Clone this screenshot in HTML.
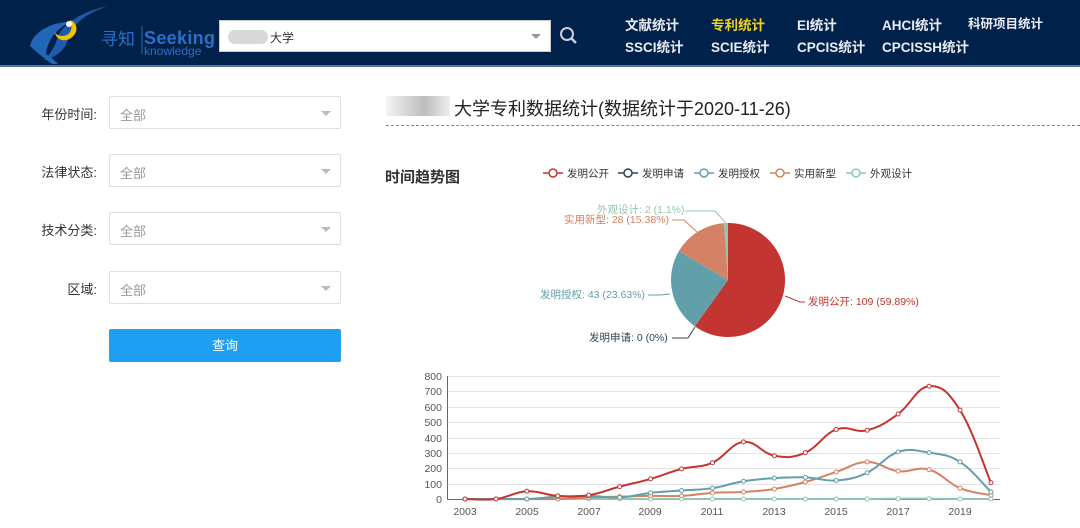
<!DOCTYPE html>
<html><head><meta charset="utf-8"><style>
*{margin:0;padding:0;box-sizing:border-box}
body{width:1080px;height:528px;background:#fff;font-family:"Liberation Sans","Noto Sans CJK SC",sans-serif;position:relative;overflow:hidden}
.hdr{position:absolute;left:0;top:0;width:1080px;height:67px;background:#00214a;border-bottom:2px solid #5a7398}
.nav{position:absolute;color:#e8ecf2;font-size:13.5px;font-weight:bold}
.lbl{position:absolute;left:0;width:97px;text-align:right;font-size:13px;color:#333}
.sel{position:absolute;left:109px;width:232px;height:33px;border:1px solid #dcdfe6;border-radius:2px;font-size:13px;color:#999;padding:8px 10px}
.sel:after{content:"";position:absolute;right:9px;top:14px;border:5px solid transparent;border-top:5px solid #bbb}
.t{font-family:"Liberation Sans","Noto Sans CJK SC",sans-serif}
</style></head><body>
<div class="hdr">
 <svg width="230" height="66" style="position:absolute;left:0;top:0">
  <path d="M108 6 C85 14 72 24 68 40 C64 52 54 58 44 60 C52 52 56 44 58 36 C66 20 88 10 108 6 Z" fill="#1e5aa8"/>
  <path d="M32 40 C40 28 55 22 70 22 C58 28 48 38 46 54 C52 58 56 62 58 64 L52 64 C44 58 36 52 30 46 Z" fill="#2266b8"/>
  <path d="M55 32 C56 42 70 44 76 32 C78 26 74 21 70 20 C73 26 72 36 62 36 C58 36 56 34 55 32 Z" fill="#f2c200"/>
  <circle cx="69" cy="24" r="3" fill="#fff"/>
  <text x="101" y="45" fill="#2d6fc4" font-size="17" class="t">寻知</text>
  <line x1="142" y1="26" x2="142" y2="54" stroke="#2d6fc4"/>
  <text x="144" y="44" fill="#2d6fc4" font-size="18" font-weight="bold" class="t" textLength="71">Seeking</text>
  <text x="144" y="55" fill="#2d6fc4" font-size="12" class="t">knowledge</text>
 </svg>
 <div style="position:absolute;left:219px;top:20px;width:332px;height:32px;background:#fff;border:1px solid #ccc">
  <div style="position:absolute;left:8px;top:9px;width:40px;height:14px;background:#d8d8d8;border-radius:7px"></div>
  <span style="position:absolute;left:50px;top:8px;font-size:12px;color:#333">大学</span>
  <div style="position:absolute;right:9px;top:13px;border:5px solid transparent;border-top:5px solid #999"></div>
 </div>
 <svg width="20" height="20" style="position:absolute;left:559px;top:26px"><circle cx="8" cy="8" r="6" stroke="#ccd" stroke-width="2" fill="none"/><line x1="12" y1="12" x2="17" y2="17" stroke="#ccd" stroke-width="2.5"/></svg>
 <div class="nav" style="left:625px;top:14px">文献统计</div>
 <div class="nav" style="left:711px;top:14px;color:#f0d020">专利统计</div>
 <div class="nav" style="left:797px;top:14px">EI统计</div>
 <div class="nav" style="left:882px;top:14px">AHCI统计</div>
 <div class="nav" style="left:968px;top:13px;font-size:12.5px">科研项目统计</div>
 <div class="nav" style="left:625px;top:36px">SSCI统计</div>
 <div class="nav" style="left:711px;top:36px">SCIE统计</div>
 <div class="nav" style="left:797px;top:36px">CPCIS统计</div>
 <div class="nav" style="left:882px;top:36px">CPCISSH统计</div>
</div>

<div class="lbl" style="top:104px">年份时间:</div><div class="sel" style="top:96px">全部</div>
<div class="lbl" style="top:162px">法律状态:</div><div class="sel" style="top:154px">全部</div>
<div class="lbl" style="top:220px">技术分类:</div><div class="sel" style="top:212px">全部</div>
<div class="lbl" style="top:279px">区域:</div><div class="sel" style="top:271px">全部</div>
<div style="position:absolute;left:109px;top:329px;width:232px;height:33px;background:#1e9ff2;color:#fff;font-size:13px;text-align:center;line-height:33px;border-radius:2px">查询</div>

<div style="position:absolute;left:386px;top:96px;width:64px;height:20px;background:linear-gradient(90deg,#f4f4f4,#cfcfcf 40%,#bdbdbd 60%,#eee)"></div>
<div style="position:absolute;left:454px;top:95px;font-size:18px;color:#222">大学专利数据统计(数据统计于2020-11-26)</div>
<div style="position:absolute;left:386px;top:125px;width:694px;border-top:1px dashed #888"></div>
<div style="position:absolute;left:385px;top:166px;font-size:15px;font-weight:bold;color:#333">时间趋势图</div>

<svg id="c" width="1080" height="528" style="position:absolute;left:0;top:0" class="t">
 <g font-size="10.5">
  <g transform="translate(543,173)"><line x1="0" y1="0" x2="20" y2="0" stroke="#c23531" stroke-width="1.5"/><circle cx="10" cy="0" r="4" fill="#fff" stroke="#c23531" stroke-width="1.5"/><text x="24" y="4" fill="#333">发明公开</text></g>
  <g transform="translate(618,173)"><line x1="0" y1="0" x2="20" y2="0" stroke="#2f4554" stroke-width="1.5"/><circle cx="10" cy="0" r="4" fill="#fff" stroke="#2f4554" stroke-width="1.5"/><text x="24" y="4" fill="#333">发明申请</text></g>
  <g transform="translate(694,173)"><line x1="0" y1="0" x2="20" y2="0" stroke="#61a0a8" stroke-width="1.5"/><circle cx="10" cy="0" r="4" fill="#fff" stroke="#61a0a8" stroke-width="1.5"/><text x="24" y="4" fill="#333">发明授权</text></g>
  <g transform="translate(770,173)"><line x1="0" y1="0" x2="20" y2="0" stroke="#d48265" stroke-width="1.5"/><circle cx="10" cy="0" r="4" fill="#fff" stroke="#d48265" stroke-width="1.5"/><text x="24" y="4" fill="#333">实用新型</text></g>
  <g transform="translate(846,173)"><line x1="0" y1="0" x2="20" y2="0" stroke="#91c7ae" stroke-width="1.5"/><circle cx="10" cy="0" r="4" fill="#fff" stroke="#91c7ae" stroke-width="1.5"/><text x="24" y="4" fill="#333">外观设计</text></g>
 </g>
 <path d="M728 280 L728 223 A57 57 0 1 1 694.8 326.3 Z" fill="#c23531"/>
 <path d="M728 280 L694.8 326.3 A57 57 0 0 1 678.9 251 Z" fill="#61a0a8"/>
 <path d="M728 280 L678.9 251 A57 57 0 0 1 724 223.1 Z" fill="#d48265"/>
 <path d="M728 280 L724 223.1 A57 57 0 0 1 728 223 Z" fill="#91c7ae"/>
 <g fill="none" stroke-width="1">
  <polyline points="785,296 800,302 805,302" stroke="#c23531"/>
  <polyline points="695,327 688,338 672,338" stroke="#2f4554"/>
  <polyline points="670,294 660,295 648,295" stroke="#61a0a8"/>
  <polyline points="697,232 684,220 672,220" stroke="#d48265"/>
  <polyline points="726,223 715,211 685,211" stroke="#91c7ae"/>
 </g>
 <g font-size="10.5">
  <text x="808" y="305" fill="#c23531">发明公开: 109 (59.89%)</text>
  <text x="589" y="341" fill="#2f4554">发明申请: 0 (0%)</text>
  <text x="540" y="298" fill="#61a0a8">发明授权: 43 (23.63%)</text>
  <text x="564" y="223" fill="#d48265">实用新型: 28 (15.38%)</text>
  <text x="597" y="213" fill="#91c7ae">外观设计: 2 (1.1%)</text>
 </g>
 <g stroke="#e4e4e4" stroke-width="1">
  <line x1="448" y1="376.5" x2="1000" y2="376.5"/><line x1="448" y1="391.5" x2="1000" y2="391.5"/><line x1="448" y1="407.5" x2="1000" y2="407.5"/><line x1="448" y1="422.5" x2="1000" y2="422.5"/><line x1="448" y1="438.5" x2="1000" y2="438.5"/><line x1="448" y1="453.5" x2="1000" y2="453.5"/><line x1="448" y1="468.5" x2="1000" y2="468.5"/><line x1="448" y1="484.5" x2="1000" y2="484.5"/>
 </g>
 <g font-size="10.5" fill="#555" text-anchor="end">
  <text x="442" y="380">800</text><text x="442" y="395">700</text><text x="442" y="411">600</text><text x="442" y="426">500</text><text x="442" y="442">400</text><text x="442" y="457">300</text><text x="442" y="472">200</text><text x="442" y="488">100</text><text x="442" y="503">0</text>
 </g>
 <g stroke="#666" stroke-width="1"><line x1="447.5" y1="376" x2="447.5" y2="500"/><line x1="447" y1="499.5" x2="1000" y2="499.5"/></g>
 <g font-size="10.5" fill="#555" text-anchor="middle">
  <text x="465" y="515">2003</text><text x="527" y="515">2005</text><text x="589" y="515">2007</text><text x="650" y="515">2009</text><text x="712" y="515">2011</text><text x="774" y="515">2013</text><text x="836" y="515">2015</text><text x="898" y="515">2017</text><text x="960" y="515">2019</text>
 </g>
 <g id="lines"></g>
</svg>
<script>
var S=[["#91c7ae",[0,0,0,0,0,0,0,0,0,0,0,0,0,0,2,2,0,0]],
["#d48265",[0,0,0,0,10,15,20,20,40,45,65,110,175,240,180,190,70,25]],
["#61a0a8",[0,0,0,15,20,10,40,55,70,115,135,140,120,170,305,300,240,45]],
["#c23531",[0,0,50,20,25,80,130,195,235,370,280,300,450,445,550,730,575,105]]];
var g=document.getElementById('lines'),h='';
S.forEach(function(s){var p=s[1].map(function(v,i){return [465+i*30.94,499-v*0.1545]});
var d='M'+p[0][0]+' '+p[0][1];
for(var i=0;i<p.length-1;i++){var a=p[i-1]||p[i],b=p[i],c=p[i+1],e=p[i+2]||c,k=0.2;
d+=' C'+(b[0]+(c[0]-a[0])*k)+' '+(b[1]+(c[1]-a[1])*k)+' '+(c[0]-(e[0]-b[0])*k)+' '+(c[1]-(e[1]-b[1])*k)+' '+c[0]+' '+c[1];}
h+='<path d="'+d+'" fill="none" stroke="'+s[0]+'" stroke-width="2"/>';
p.forEach(function(q){h+='<circle cx="'+q[0]+'" cy="'+q[1]+'" r="2" fill="#fff" stroke="'+s[0]+'"/>'});});
g.innerHTML=h;
</script>
</body></html>
